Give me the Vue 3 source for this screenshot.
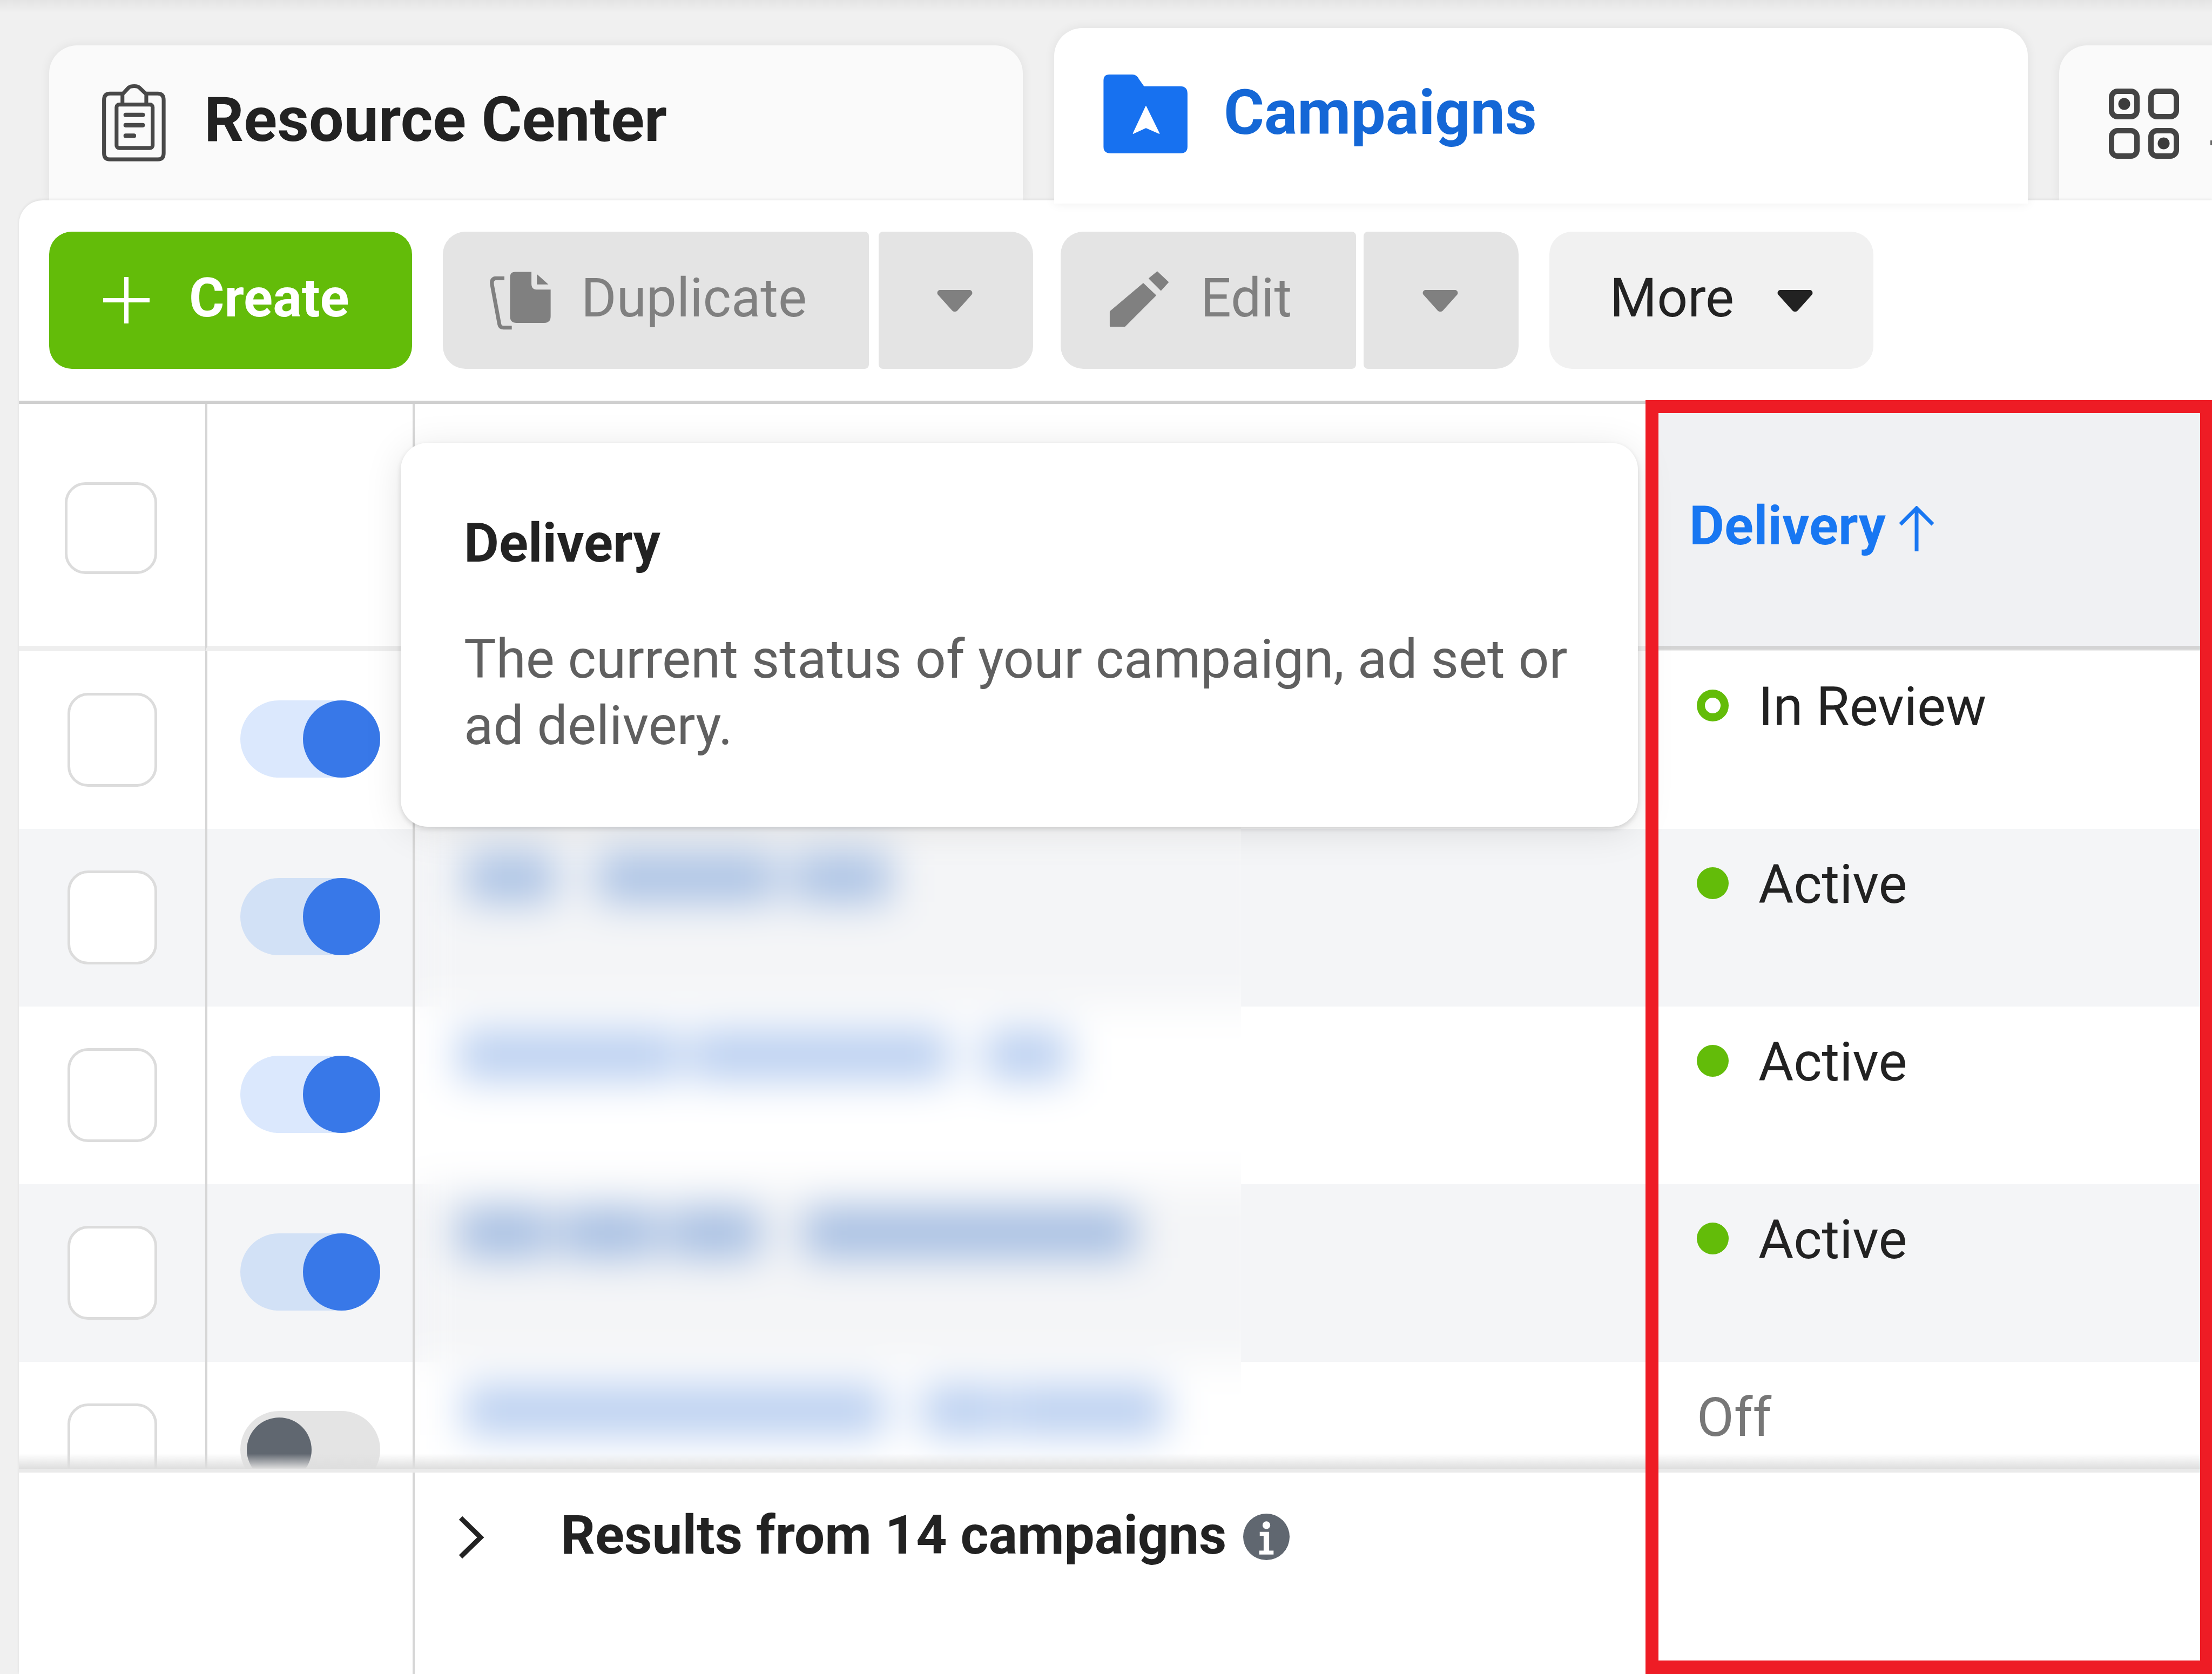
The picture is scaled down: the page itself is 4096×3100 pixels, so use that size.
<script setup>
const rows = [
  { status: 'review', label: 'In Review', on: true },
  { status: 'active', label: 'Active', on: true },
  { status: 'active', label: 'Active', on: true },
  { status: 'active', label: 'Active', on: true },
  { status: 'off', label: 'Off', on: false }
]
const blurRows = [
  { tone: '#a9c1e4', bars: [[14, 167], [257, 333], [620, 182]] },
  { tone: '#a9c1e4', bars: [[14, 167], [257, 333], [620, 182]] },
  { tone: '#b8cef0', bars: [[0, 410], [430, 480], [975, 155]] },
  { tone: '#a4bde2', bars: [[0, 170], [190, 180], [389, 172], [640, 614]] },
  { tone: '#b8cef0', bars: [[11, 780], [859, 152], [1020, 290]] }
]
</script>

<template>
  <div class="page">
    <div class="tabs">
      <div class="tab tab-resource">
        <svg class="ico-clip" viewBox="0 0 660 630" fill="none" stroke="#484848" stroke-width="26" stroke-linejoin="round">
          <path d="M230 125H145Q105 125 105 170V530Q105 572 145 572H470Q510 572 510 530V170Q510 125 470 125H385" />
          <path d="M230 195V130L272 85Q285 75 310 75Q335 75 345 85L392 130V195" />
          <rect x="190" y="200" width="245" height="295" rx="18" />
          <path d="M252 270H368M252 340H368M252 412H308" stroke-width="30" stroke-linecap="round" />
        </svg>
        <span class="tab-label">Resource Center</span>
      </div>
      <div class="tab tab-campaigns">
        <svg class="ico-folder" viewBox="0 0 720 660">
          <path d="M110 55H265Q295 55 310 85L345 135H590Q640 135 640 185V545Q640 590 590 590H120Q70 590 70 545V95Q70 55 110 55Z" fill="#1771f0" />
          <path d="M358 272L448 455L358 415L272 455Z" fill="#fff" stroke="#fff" stroke-width="6" stroke-linejoin="round" />
        </svg>
        <span class="tab-label tab-label-blue">Campaigns</span>
      </div>
      <div class="tab tab-third">
        <svg class="ico-grid" viewBox="0 0 130 130" fill="none" stroke="#444" stroke-width="10">
          <rect x="5" y="5" width="47" height="47" rx="11" />
          <rect x="78" y="5" width="47" height="47" rx="11" />
          <rect x="5" y="78" width="47" height="47" rx="11" />
          <rect x="78" y="78" width="47" height="47" rx="11" />
          <circle cx="28.500" cy="28.500" r="11" fill="#3c3c3c" stroke="none" />
          <circle cx="101.500" cy="101.500" r="11" fill="#3c3c3c" stroke="none" />
        </svg>
        <i class="tab-mark"></i>
      </div>
    </div>

    <div class="panel">
      <div class="toolbar">
        <button class="btn btn-create">
          <svg class="ico-plus" viewBox="0 0 86 86"><path d="M43 0v86M0 43h86" stroke="#fff" stroke-width="8" /></svg>
          <span class="bold">Create</span>
        </button>
        <div class="split split-dup">
          <button class="btn btn-off btn-dup">
            <svg class="ico-dup" viewBox="0 0 720 570">
              <path d="M285 75H395V155Q395 195 435 195H525V375Q525 420 480 420H295Q250 420 250 375V110Q250 75 285 75Z" fill="#808080" />
              <path d="M432 90L510 160H432Z" fill="#808080" />
              <path d="M212 118H150Q122 125 128 160L178 430Q182 452 205 452H262" fill="none" stroke="#808080" stroke-width="26" />
            </svg>
            <span>Duplicate</span>
          </button>
          <button class="btn btn-off btn-caret">
            <svg class="ico-caret" viewBox="0 0 66 42"><path d="M6 0h54c5 0 7 6 4 9L38 38c-3 3-7 3-10 0L2 9C-1 6 1 0 6 0z" fill="#808080" /></svg>
          </button>
        </div>
        <div class="split split-edit">
          <button class="btn btn-off btn-edit">
            <svg class="ico-pencil" viewBox="0 0 570 540">
              <path d="M285 155L370 235L160 445H60V345Z" fill="#808080" stroke="#808080" stroke-width="6" stroke-linejoin="round" />
              <path d="M380 75L455 145L405 200L325 120Z" fill="#808080" stroke="#808080" stroke-width="6" stroke-linejoin="round" />
            </svg>
            <span>Edit</span>
          </button>
          <button class="btn btn-off btn-caret btn-caret-edit">
            <svg class="ico-caret" viewBox="0 0 66 42"><path d="M6 0h54c5 0 7 6 4 9L38 38c-3 3-7 3-10 0L2 9C-1 6 1 0 6 0z" fill="#808080" /></svg>
          </button>
        </div>
        <button class="btn btn-more">
          <span>More</span>
          <svg class="ico-caret" viewBox="0 0 66 42"><path d="M6 0h54c5 0 7 6 4 9L38 38c-3 3-7 3-10 0L2 9C-1 6 1 0 6 0z" fill="#222" /></svg>
        </button>
      </div>

      <div class="table">
        <div class="t-row t-head">
          <div class="cell cell-check"><span class="check check-head"></span></div>
          <div class="cell cell-toggle"></div>
          <div class="cell cell-name"></div>
          <div class="cell cell-delivery head-delivery">
            <span class="sort-label">Delivery</span>
            <svg class="ico-arrow" viewBox="0 0 68 84" fill="none" stroke="#1877f2" stroke-width="7"><path d="M34 84V4M4 34L34 4l30 30" /></svg>
          </div>
        </div>

        <div class="t-body">
          <div v-for="(row, i) in rows" :key="i" class="t-row t-item" :class="{ striped: i % 2 === 1 }">
            <div class="cell cell-check"><span class="check"></span></div>
            <div class="cell cell-toggle">
              <span class="toggle" :class="row.on ? 'toggle-on' : 'toggle-off'"><i class="knob"></i></span>
            </div>
            <div class="cell cell-name"></div>
            <div class="cell cell-delivery">
              <i v-if="row.status !== 'off'" class="dot" :class="'dot-' + row.status"></i>
              <span :class="{ muted: row.status === 'off' }">{{ row.label }}</span>
            </div>
          </div>
          <div class="redaction">
            <div class="red-inner">
              <div v-for="(b, i) in blurRows" :key="i" class="red-row" :class="{ striped: i % 2 === 1 }">
                <i
                  v-for="(bar, j) in b.bars"
                  :key="j"
                  class="red-bar"
                  :style="{ left: bar[0] + 'px', width: bar[1] + 'px', background: b.tone }"
                ></i>
              </div>
            </div>
          </div>
          <div class="fade"></div>
        </div>

        <div class="t-foot">
          <div class="foot-left"></div>
          <div class="foot-main">
            <svg class="ico-chev" viewBox="0 0 50 80" fill="none" stroke="#222" stroke-width="9"><path d="M6 4l37 36L6 76" /></svg>
            <span class="bold foot-text">Results from 14 campaigns</span>
            <svg class="ico-info" viewBox="0 0 84 84">
              <circle cx="42" cy="42" r="42" fill="#606770" />
              <circle cx="42" cy="21" r="7" fill="#fff" />
              <path d="M30 33h17v34h8v7H29v-7h8V40h-7z" fill="#fff" />
            </svg>
          </div>
        </div>
      </div>
    </div>

    <div class="tooltip">
      <div class="tip-title bold">Delivery</div>
      <p class="tip-text">The current status of your campaign, ad set or ad delivery.</p>
    </div>
    <div class="red-frame"></div>
  </div>
</template>

<style>
html, body { margin: 0; background: #f1f1f1; }
</style>

<style scoped>
.page {
  position: relative;
  width: 4096px;
  height: 3100px;
  overflow: hidden;
  background: linear-gradient(#e4e4e4 0, #f0f0f0 24px);
  font-family: Roboto, "Liberation Sans", sans-serif;
  font-size: 100px;
  color: #222;
}
.bold { font-weight: 700; }

.tabs {
  display: flex;
  align-items: flex-end;
  gap: 58px;
  height: 371px;
  padding-left: 91px;
}
.tab {
  flex: none;
  display: flex;
  align-items: flex-start;
  box-sizing: border-box;
  width: 1803px;
  height: 287px;
  border-radius: 52px 52px 0 0;
  background: #fafafa;
  box-shadow: 0 0 20px rgba(0, 0, 0, 0.07);
}
.tab-resource { padding: 55px 0 0 73px; }
.tab-campaigns {
  position: relative;
  z-index: 2;
  height: 325px;
  margin-bottom: -6px;
  padding: 71px 0 0 72px;
  background: #fff;
}
.tab-third { padding: 80px 0 0 92px; }
.tab-label {
  margin: 19px 0 0 34px;
  font-size: 114.5px;
  font-weight: 700;
  line-height: 128px;
  white-space: nowrap;
}
.tab-label-blue {
  margin: 22px 0 0 45px;
  color: #1467d6;
}
.tab-mark {
  display: block;
  width: 4px;
  height: 9px;
  margin: 96px 0 0 58px;
  background: #666;
}
.ico-clip { width: 180px; height: 172px; flex: none; }
.ico-folder { width: 197px; height: 180px; flex: none; }
.ico-grid { width: 130px; height: 130px; flex: none; }

.panel {
  position: relative;
  height: 2729px;
  margin-left: 35px;
  border-radius: 44px 0 0 0;
  background: #fff;
  box-shadow: 0 -2px 5px rgba(0, 0, 0, 0.07);
}
.toolbar {
  display: flex;
  height: 371px;
  box-sizing: border-box;
  padding: 58px 0 0 56px;
  gap: 57px;
}
.btn {
  display: flex;
  align-items: center;
  box-sizing: border-box;
  height: 254px;
  margin: 0;
  padding: 0;
  border: 0;
  border-radius: 42px;
  font: inherit;
  color: inherit;
}
.btn span { margin-top: -10px; }
.btn-create {
  width: 672px;
  padding-left: 100px;
  gap: 73px;
  background: #63bc09;
  color: #fff;
}
.ico-plus { width: 86px; height: 86px; flex: none; }
.split { display: flex; gap: 18px; }
.split-edit { gap: 14px; margin-left: -6px; }
.btn-off { background: #e4e4e4; color: #808080; }
.btn-dup {
  width: 789px;
  padding-left: 56px;
  gap: 3px;
  border-radius: 42px 8px 8px 42px;
}
.btn-edit {
  width: 547px;
  padding-left: 75px;
  border-radius: 42px 8px 8px 42px;
  gap: 28px;
}
.btn-caret {
  justify-content: center;
  width: 286px;
  padding-right: 4px;
  border-radius: 8px 42px 42px 8px;
}
.btn-caret-edit { width: 287px; }
.btn-more {
  justify-content: center;
  width: 600px;
  gap: 80px;
  background: #f1f1f1;
}
.ico-dup { width: 197px; height: 156px; flex: none; margin-top: 10px; }
.ico-pencil { width: 156px; height: 147px; flex: none; }
.ico-caret { width: 66px; height: 42px; flex: none; margin-top: 3px; }

.table {
  display: flex;
  flex-direction: column;
  border-top: 6px solid #cfcfcf;
}
.t-row {
  display: grid;
  grid-template-columns: 345px 384px 2286px 1046px;
}
.t-head { height: 458px; }
.t-head .cell { border-bottom: 10px solid #eeeeee; }
.cell {
  box-sizing: border-box;
  min-width: 0;
}
.cell-check { position: relative; }
.cell-toggle { position: relative; border-left: 4px solid #d6d6d6; }
.cell-name { border-left: 4px solid #d6d6d6; }
.check {
  position: absolute;
  left: 90px;
  top: 77px;
  box-sizing: border-box;
  width: 166px;
  height: 174px;
  border: 5px solid #dcdcdc;
  border-radius: 38px;
  background: #fff;
}
.check-head {
  left: 85px;
  top: 145px;
  width: 171px;
  height: 170px;
}
.cell-delivery {
  display: flex;
  align-items: flex-start;
  padding: 44px 0 0 92px;
  line-height: 118px;
}
.t-head .head-delivery {
  align-items: center;
  padding: 0 0 0 78px;
  background: #f0f1f3;
  border-bottom: 3px solid #eeeeee;
  font-size: 100px;
  line-height: 1;
  box-shadow: inset 0 -7px 0 #d4d4d4;
}
.sort-label {
  font-weight: 700;
  color: #1877f2;
  margin-top: -3px;
}
.ico-arrow { width: 68px; height: 84px; margin: 6px 0 0 23px; }

.t-body {
  position: relative;
  height: 1514px;
  overflow: hidden;
}
.t-item { height: 329px; }
.striped { background: #f4f5f7; }
.toggle {
  position: absolute;
  left: 61px;
  top: 91px;
  width: 259px;
  height: 143px;
  border-radius: 72px;
}
.toggle-on { background: #dbe8fd; }
.striped .toggle-on { background: #d2e1f6; }
.toggle-off { background: #e4e4e4; }
.knob {
  position: absolute;
  display: block;
  border-radius: 50%;
}
.toggle-on .knob {
  right: 0;
  top: 0;
  width: 143px;
  height: 143px;
  background: #3878e8;
}
.toggle-off .knob {
  left: 12px;
  top: 12px;
  width: 120px;
  height: 120px;
  background: #606770;
}
.dot {
  flex: none;
  box-sizing: border-box;
  width: 59px;
  height: 59px;
  margin: 27px 55px 0 0;
  border-radius: 50%;
  background: #63bc09;
}
.dot-review {
  border: 15px solid #63bc09;
  background: #fff;
}
.muted { color: #777; }

.redaction {
  position: absolute;
  left: 733px;
  top: 0;
  width: 1530px;
  height: 1514px;
  overflow: hidden;
}
.red-inner {
  width: 1600px;
  height: 1645px;
  filter: blur(38px);
}
.red-row {
  position: relative;
  height: 329px;
  background: #fff;
}
.red-row.striped { background: #f4f5f7; }
.red-bar {
  position: absolute;
  top: 44px;
  height: 92px;
  margin-left: 80px;
}
.fade {
  position: absolute;
  left: 0;
  right: 0;
  bottom: 0;
  height: 28px;
  background: linear-gradient(rgba(222, 222, 222, 0), rgba(222, 222, 222, 1));
}

.t-foot {
  display: flex;
  height: 373px;
  border-top: 7px solid #eaeaea;
}
.foot-left { width: 729px; flex: none; }
.foot-main {
  flex: 1;
  display: flex;
  align-items: flex-start;
  padding: 57px 0 0 79px;
  border-left: 4px solid #d6d6d6;
  line-height: 118px;
}
.foot-text { margin-left: 141px; }
.ico-chev { width: 50px; height: 80px; margin-top: 23px; flex: none; }
.ico-info { width: 86px; height: 86px; margin: 19px 0 0 31px; flex: none; }

.tooltip {
  position: absolute;
  left: 742px;
  top: 820px;
  box-sizing: border-box;
  width: 2291px;
  height: 711px;
  padding: 127px 117px 0;
  border-radius: 50px;
  background: #fff;
  box-shadow: 0 4px 10px rgba(0, 0, 0, 0.14), 0 10px 70px rgba(0, 0, 0, 0.1);
}
.tip-title { line-height: 118px; }
.tip-text {
  margin: 94px 0 0;
  color: #606060;
  line-height: 123px;
}
.red-frame {
  position: absolute;
  left: 3047px;
  top: 741px;
  right: 0;
  bottom: 0;
  box-sizing: border-box;
  border: solid #ee1c25;
  border-width: 24px 22px 25px 24px;
}
</style>
